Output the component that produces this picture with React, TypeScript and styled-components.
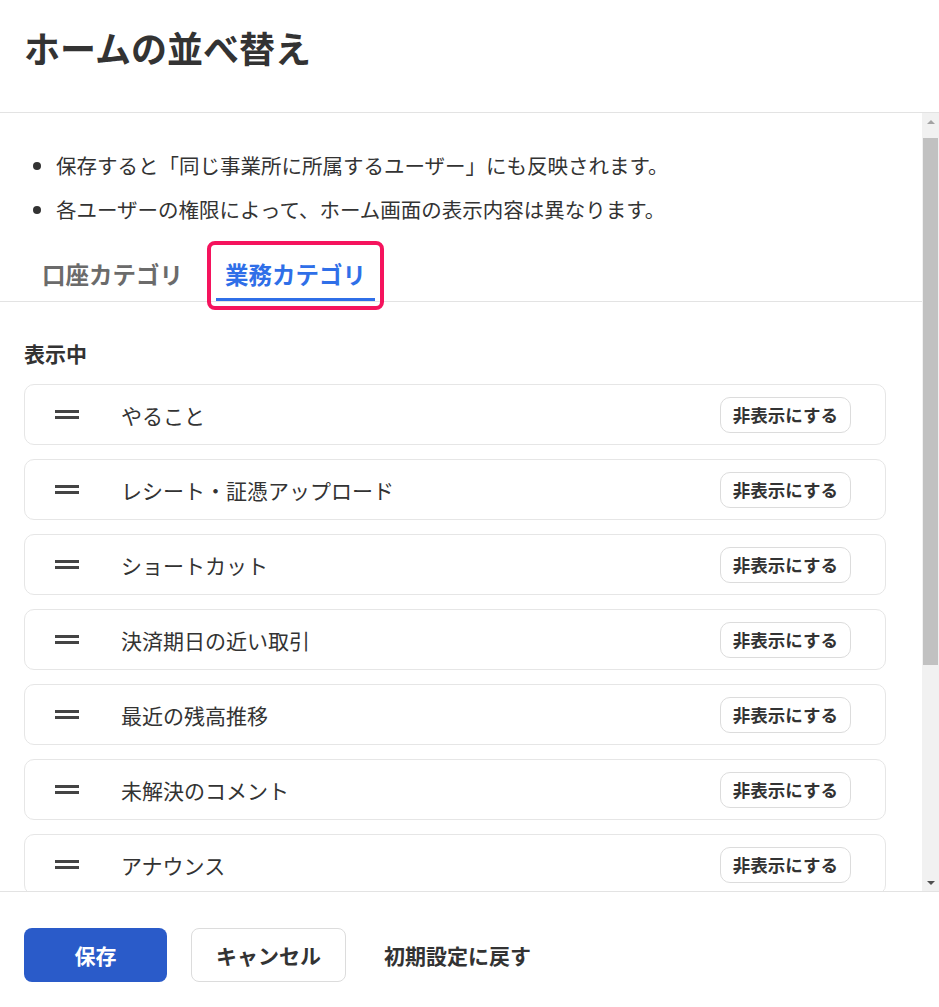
import styled, { createGlobalStyle } from 'styled-components'

const GlobalStyle = createGlobalStyle`
   html, body { margin: 0; padding: 0; background: #fff; }
   body { font-family: "Noto Sans CJK JP", "Noto Sans", sans-serif; color: #333; }
   * { box-sizing: border-box; }
`

const Page = styled.div`
   width: 939px;
   height: 1007px;
   display: flex;
   flex-direction: column;
`

const Header = styled.header`
   height: 113px;
   border-bottom: 1px solid #e3e3e3;
   padding: 22px 24px 0;
`

const Title = styled.h1`
   margin: 0;
   font-size: 36px;
   font-weight: 700;
   line-height: 50px;
   color: #333;
`

const ScrollWrap = styled.div`
   height: 778px;
   display: flex;
`

const Scroll = styled.div`
   flex: 1;
   overflow-y: auto;
   scrollbar-width: none;
   &::-webkit-scrollbar { display: none; }
`

const ScrollBar = styled.div`
   width: 17px;
   background: #f1f1f1;
   display: flex;
   flex-direction: column;
   align-items: center;
`

const Arrow = styled.div<{ $down?: boolean }>`
   height: 17px;
   width: 17px;
   display: flex;
   align-items: center;
   justify-content: center;
   &::before {
      content: '';
      border-left: 4px solid transparent;
      border-right: 4px solid transparent;
      ${(p) => (p.$down ? 'border-top: 4px solid #505050;' : 'border-bottom: 4px solid #a3a3a3;')}
   }
`

const Thumb = styled.div`
   width: 15px;
   height: 527px;
   background: #c1c1c1;
   margin-top: 8px;
`

const Track = styled.div`
   flex: 1;
   display: flex;
   flex-direction: column;
   align-items: center;
`

const Notes = styled.ul`
   margin: 0;
   padding: 30px 24px 0 56px;
   font-size: 20.5px;
   line-height: 44px;
   color: #333;
`

const Tabs = styled.div`
   display: flex;
   margin-top: 16px;
   border-bottom: 1px solid #e3e3e3;
   padding-left: 24px;
`

const Tab = styled.div<{ $active?: boolean }>`
   position: relative;
   padding: 0 18px;
   height: 54px;
   display: flex;
   align-items: center;
   font-size: 23.5px;
   font-weight: 700;
   color: ${(p) => (p.$active ? '#2f6fe8' : '#6b6b6b')};
   ${(p) =>
      p.$active &&
      `
      margin-left: 6px;
      &::after {
         content: '';
         position: absolute;
         left: 9px; right: 9px; bottom: 0;
         height: 3px;
         background: #2f6fe8;
      }
      &::before {
         content: '';
         position: absolute;
         left: 0; right: 0; top: -6px; bottom: -9px;
         border: 4px solid #f5135d;
         border-radius: 8px;
      }
   `}
`

const Section = styled.div`
   padding: 34px 36px 24px 24px;
`

const SectionTitle = styled.h2`
   margin: 0 0 14px;
   font-size: 21px;
   font-weight: 700;
   color: #333;
   line-height: 34px;
`

const List = styled.div`
   display: flex;
   flex-direction: column;
   gap: 14px;
`

const Row = styled.div`
   height: 61px;
   border: 1px solid #e6e6e6;
   border-radius: 10px;
   display: flex;
   align-items: center;
   padding: 0 34px 0 30px;
`

const Handle = styled.span`
   width: 24px;
   height: 9px;
   border-top: 3px solid #444;
   border-bottom: 3px solid #444;
   margin-right: 42px;
`

const Label = styled.span`
   flex: 1;
   font-size: 21px;
   color: #333;
`

const SmallButton = styled.button`
   font-family: inherit;
   font-size: 17.5px;
   font-weight: 700;
   color: #333;
   background: #fff;
   border: 1px solid #dcdcdc;
   border-radius: 10px;
   height: 36px;
   padding: 0 12px;
`

const Footer = styled.footer`
   flex: 1;
   border-top: 1px solid #e3e3e3;
   display: flex;
   align-items: center;
   gap: 24px;
   padding: 10px 24px 0;
`

const FooterButton = styled.button<{ $primary?: boolean; $plain?: boolean }>`
   font-family: inherit;
   font-size: 21px;
   font-weight: 700;
   height: 54px;
   border-radius: 8px;
   padding: 0 24px;
   min-width: 143px;
   white-space: nowrap;
   background: ${(p) => (p.$primary ? '#2a5bc9' : '#fff')};
   color: ${(p) => (p.$primary ? '#fff' : '#333')};
   border: ${(p) => (p.$primary || p.$plain ? 'none' : '1px solid #dcdcdc')};
   ${(p) => p.$plain && 'min-width: 0; padding: 0 14px;'}
`

const items = [
   'やること',
   'レシート・証憑アップロード',
   'ショートカット',
   '決済期日の近い取引',
   '最近の残高推移',
   '未解決のコメント',
   'アナウンス',
   '経営状況',
   '登録済みの口座',
]

const App = () => {
   return (
      <Page>
         <GlobalStyle />
         <Header>
            <Title>ホームの並べ替え</Title>
         </Header>
         <ScrollWrap>
            <Scroll>
               <Notes>
                  <li>保存すると「同じ事業所に所属するユーザー」にも反映されます。</li>
                  <li>各ユーザーの権限によって、ホーム画面の表示内容は異なります。</li>
               </Notes>
               <Tabs>
                  <Tab>口座カテゴリ</Tab>
                  <Tab $active>業務カテゴリ</Tab>
               </Tabs>
               <Section>
                  <SectionTitle>表示中</SectionTitle>
                  <List>
                     {items.map((item) => (
                        <Row key={item}>
                           <Handle />
                           <Label>{item}</Label>
                           <SmallButton>非表示にする</SmallButton>
                        </Row>
                     ))}
                  </List>
               </Section>
            </Scroll>
            <ScrollBar>
               <Arrow />
               <Track>
                  <Thumb />
               </Track>
               <Arrow $down />
            </ScrollBar>
         </ScrollWrap>
         <Footer>
            <FooterButton $primary>保存</FooterButton>
            <FooterButton>キャンセル</FooterButton>
            <FooterButton $plain>初期設定に戻す</FooterButton>
         </Footer>
      </Page>
   )
}

export default App
